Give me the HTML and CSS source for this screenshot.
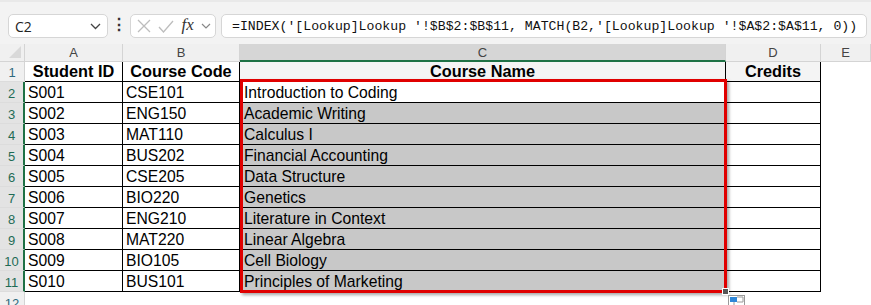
FILE: index.html
```html
<!DOCTYPE html>
<html lang="en">
<head>
    <meta charset="UTF-8">
    <title>Lookup sheet</title>
    <link rel="stylesheet" href="styles.css">
</head>
<body>
    <div class="toolbar">
        <div class="name-box">
            <span>C2</span>
            <svg class="chev" width="11" height="7" viewBox="0 0 11 7"><path d="M1 1l4.5 4.5L10 1" fill="none" stroke="#444" stroke-width="1.3"/></svg>
        </div>
        <div class="dots">&#8942;</div>
        <div class="fx-box">
            <svg width="14" height="14" viewBox="0 0 14 14"><path d="M1 1l12 12M13 1L1 13" stroke="#bdbdbd" stroke-width="1.3"/></svg>
            <svg width="16" height="13" viewBox="0 0 16 13"><path d="M1 7l4.5 5L15 1" fill="none" stroke="#bdbdbd" stroke-width="1.3"/></svg>
            <span class="fx">fx</span>
            <svg width="10" height="6" viewBox="0 0 10 6"><path d="M1 1l4 4 4-4" fill="none" stroke="#888" stroke-width="1.2"/></svg>
        </div>
        <div class="formula">=INDEX('[Lookup]Lookup '!$B$2:$B$11, MATCH(B2,'[Lookup]Lookup '!$A$2:$A$11, 0))</div>
    </div>

    <div class="sheet">
        <div class="row head">
            <div class="corner"><span class="tri"></span></div>
            <div class="ch">A</div>
            <div class="ch">B</div>
            <div class="ch cur">C</div>
            <div class="ch">D</div>
            <div class="ch">E</div>
        </div>
        <div class="row">
            <div class="rh">1</div>
            <div class="c b">Student ID</div>
            <div class="c b">Course Code</div>
            <div class="c b tint">Course Name</div>
            <div class="c b tint">Credits</div>
            <div class="e"></div>
        </div>
        <div class="row">
            <div class="rh sel">2</div>
            <div class="c">S001</div>
            <div class="c">CSE101</div>
            <div class="c active">Introduction to Coding</div>
            <div class="c"></div>
            <div class="e"></div>
        </div>
        <div class="row">
            <div class="rh sel">3</div>
            <div class="c">S002</div>
            <div class="c">ENG150</div>
            <div class="c fill">Academic Writing</div>
            <div class="c"></div>
            <div class="e"></div>
        </div>
        <div class="row">
            <div class="rh sel">4</div>
            <div class="c">S003</div>
            <div class="c">MAT110</div>
            <div class="c fill">Calculus I</div>
            <div class="c"></div>
            <div class="e"></div>
        </div>
        <div class="row">
            <div class="rh sel">5</div>
            <div class="c">S004</div>
            <div class="c">BUS202</div>
            <div class="c fill">Financial Accounting</div>
            <div class="c"></div>
            <div class="e"></div>
        </div>
        <div class="row">
            <div class="rh sel">6</div>
            <div class="c">S005</div>
            <div class="c">CSE205</div>
            <div class="c fill">Data Structure</div>
            <div class="c"></div>
            <div class="e"></div>
        </div>
        <div class="row">
            <div class="rh sel">7</div>
            <div class="c">S006</div>
            <div class="c">BIO220</div>
            <div class="c fill">Genetics</div>
            <div class="c"></div>
            <div class="e"></div>
        </div>
        <div class="row">
            <div class="rh sel">8</div>
            <div class="c">S007</div>
            <div class="c">ENG210</div>
            <div class="c fill">Literature in Context</div>
            <div class="c"></div>
            <div class="e"></div>
        </div>
        <div class="row">
            <div class="rh sel">9</div>
            <div class="c">S008</div>
            <div class="c">MAT220</div>
            <div class="c fill">Linear Algebra</div>
            <div class="c"></div>
            <div class="e"></div>
        </div>
        <div class="row">
            <div class="rh sel">10</div>
            <div class="c">S009</div>
            <div class="c">BIO105</div>
            <div class="c fill">Cell Biology</div>
            <div class="c"></div>
            <div class="e"></div>
        </div>
        <div class="row">
            <div class="rh sel">11</div>
            <div class="c">S010</div>
            <div class="c">BUS101</div>
            <div class="c fill">Principles of Marketing</div>
            <div class="c"></div>
            <div class="e"></div>
        </div>
        <div class="row">
            <div class="rh">12</div>
            <div class="e"></div>
            <div class="e"></div>
            <div class="e"></div>
            <div class="e"></div>
            <div class="e"></div>
        </div>

        <!-- selection outline over C2:C11 -->
        <div class="selection"><span class="handle"></span></div>
        <div class="quick">
            <svg width="17" height="12" viewBox="0 0 17 12"><rect x="0.5" y="0.5" width="16" height="11" fill="#fff" stroke="#9a9a9a"/><rect x="2" y="2" width="7" height="5" fill="#2f87d8"/><path d="M9 2h6v5H9M6 7v5" fill="none" stroke="#9a9a9a"/></svg>
        </div>
    </div>
</body>
</html>
```

FILE: styles.css
```css
body {
    margin: 0;
    width: 871px;
    height: 305px;
    overflow: hidden;
    background: #fff;
    font-family: 'Liberation Sans', Arial, sans-serif;
    color: #000;
}

/* formula bar */
.toolbar {
    display: flex;
    align-items: flex-start;
    box-sizing: border-box;
    height: 44px;
    padding: 12px 0 0 8px;
    background: #f3f3f3;
    border-top: 2px solid #e9e9e9;
}
.name-box, .fx-box, .formula {
    box-sizing: border-box;
    height: 24px;
    background: #fff;
    border: 1px solid #d6d6d6;
    border-radius: 5px;
    display: flex;
    align-items: center;
}
.name-box {
    width: 100px;
    padding: 0 6px 0 6px;
    justify-content: space-between;
    font-family: 'Open Sans', sans-serif;
    font-size: 14px;
    color: #222;
}
.dots {
    width: 22px;
    text-align: center;
    font-size: 16px;
    line-height: 22px;
    color: #333;
    font-weight: bold;
}
.fx-box {
    width: 86px;
    padding: 0 4px 0 6px;
    justify-content: space-between;
}
.fx {
    font-family: 'Liberation Serif', serif;
    font-style: italic;
    font-size: 17px;
    color: #333;
    margin-bottom: 2px;
}
.formula {
    flex: 1;
    margin-left: 5px;
    margin-right: 4px;
    padding-left: 10px;
    font-family: 'Liberation Mono', monospace;
    font-size: 13.2px;
    color: #111;
    white-space: nowrap;
}

/* grid */
.sheet {
    position: relative;
}
.row {
    display: grid;
    grid-template-columns: 25px 98px 117px 486px 95px 1fr;
    height: 21px;
}
.row > div {
    box-sizing: border-box;
    overflow: hidden;
    white-space: nowrap;
}
.row:nth-child(2) {
    height: 20px;
}
.head {
    height: 18px !important;
    background: #f0f0f0;
    font-size: 13px;
    color: #444;
}
.corner {
    position: relative;
    border-right: 1px solid #d4d4d4;
    border-bottom: 1px solid #d4d4d4;
}
.tri {
    position: absolute;
    right: 3px;
    bottom: 3px;
    width: 0;
    height: 0;
    border-left: 12px solid transparent;
    border-bottom: 12px solid #d9d9d9;
}
.ch {
    display: flex;
    align-items: center;
    justify-content: center;
    border-right: 1px solid #d4d4d4;
    border-bottom: 1px solid #d4d4d4;
}
.ch.cur {
    background: #d6d6d6;
    border-bottom: 2px solid #1e7145;
}
.rh {
    display: flex;
    align-items: flex-end;
    justify-content: center;
    padding-bottom: 1px;
    background: #f0f0f0;
    border-right: 1px solid #d4d4d4;
    border-bottom: 1px solid #dcdcdc;
    font-size: 13px;
    color: #2e6a7e;
}
.rh.sel {
    background: #e3e3e3;
    border-right: 2px solid #1e7145;
    color: #1e6b55;
}
.c {
    display: flex;
    align-items: flex-end;
    padding: 0 0 0 3px;
    border-right: 1px solid #000;
    border-bottom: 1px solid #000;
    font-size: 15.7px;
    line-height: 19px;
}
.c.b {
    justify-content: center;
    font-weight: bold;
    font-size: 16.3px;
    padding-left: 0;
}
.c.tint {
    background: #f4f4f4;
}
.c.fill {
    background: #c8c8c8;
    padding-left: 4px;
}
.c.active {
    padding-left: 4px;
}

.selection {
    position: absolute;
    left: 240px;
    top: 35px;
    width: 487px;
    height: 214px;
    box-sizing: border-box;
    border: 3px solid #e00000;
    box-shadow: 2px 2px 3px rgba(0, 0, 0, 0.35);
}
.handle {
    position: absolute;
    right: -5px;
    bottom: -5px;
    width: 5px;
    height: 5px;
    background: #555;
    border: 1px solid #fff;
}
.quick {
    position: absolute;
    left: 728px;
    top: 251px;
    line-height: 0;
}
```
